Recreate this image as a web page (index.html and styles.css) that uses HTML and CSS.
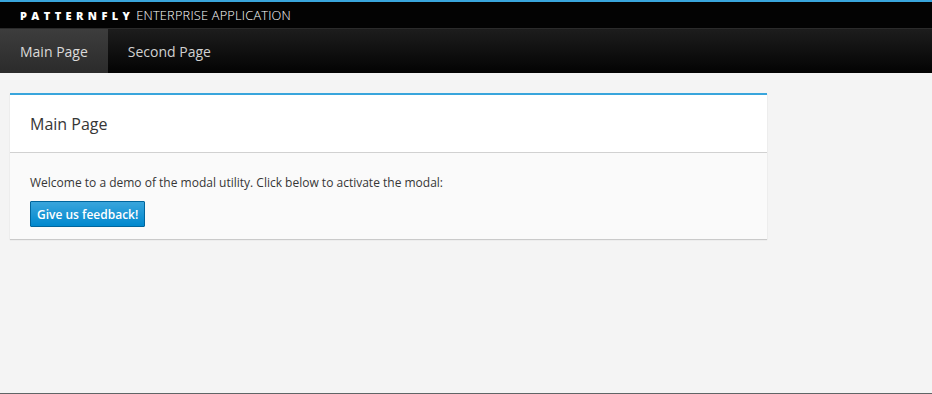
FILE: index.html
```html
<!DOCTYPE html>
<html>
  <head>
    <meta charset="UTF-8" />
    <title>Patternfly Enterprise Application</title>
    <link rel="stylesheet" href="styles.css">
  </head>
  <body>
    <div id="masthead">
      <span class="brand-name">PATTERNFLY</span>
      <span class="brand-app">ENTERPRISE APPLICATION</span>
    </div>
    <div id="navbar">
      <a class="nav-item active">Main Page</a>
      <a class="nav-item">Second Page</a>
    </div>

    <div id="content">
      <div class="card">
        <div class="card-heading">
          <h2>Main Page</h2>
        </div>
        <div class="card-body">
          <p>Welcome to a demo of the modal utility. Click below to activate the modal:</p>
          <button class="btn-primary">Give us feedback!</button>
        </div>
      </div>
    </div>
  </body>
</html>
```

FILE: styles.css
```css
html, body {
  height: 100%;
}
body {
  font-family: "Open Sans", "Liberation Sans", sans-serif;
  font-size: 12px;
  margin: 0;
  background-color: #f4f4f4;
  color: #363636;
  border-top: 2px solid #39a5dc;
  border-bottom: 1px solid #5f6566;
  box-sizing: border-box;
  display: flex;
  flex-direction: column;
}
#masthead {
  height: 26px;
  background-color: #030303;
  display: flex;
  align-items: center;
  padding-left: 20px;
  color: white;
}
.brand-name {
  font-weight: 800;
  font-size: 11px;
  letter-spacing: 4.4px;
  margin-right: 2px;
}
.brand-app {
  font-size: 12.8px;
  font-weight: 300;
  letter-spacing: 0.2px;
}
#navbar {
  height: 44px;
  display: flex;
  background: linear-gradient(#1d1d1d, #030303);
  border-top: 1px solid #2b2b2b;
}
.nav-item {
  color: #d1d1d1;
  font-size: 14px;
  padding: 0 20px;
  display: flex;
  align-items: center;
  cursor: pointer;
}
.nav-item.active {
  color: #dbdada;
  background: linear-gradient(#3d3d3d, #2b2b2b);
}
#content {
  flex: 1;
  padding: 20px 10px;
}
.card {
  width: 757px;
  background-color: #fafafa;
  border-top: 2px solid #39a5dc;
  box-shadow: 0 1px 1px rgba(3, 3, 3, 0.175);
}
.card-heading {
  background-color: white;
  border-bottom: 1px solid #d1d1d1;
  height: 57px;
  display: flex;
  align-items: center;
  padding: 0 20px;
}
.card-heading h2 {
  margin: 0;
  font-size: 16px;
  font-weight: 400;
  color: #363636;
}
.card-body {
  padding: 21px 20px 12px;
}
.card-body p {
  margin: 0 0 9px;
  line-height: 18px;
}
.btn-primary {
  font-family: "Open Sans", "Liberation Sans", sans-serif;
  font-size: 12px;
  font-weight: 600;
  color: white;
  background: linear-gradient(#39a5dc, #0088ce);
  border: 1px solid #00659c;
  border-radius: 1px;
  padding: 3px 6px;
  height: 26px;
  cursor: pointer;
}
```
